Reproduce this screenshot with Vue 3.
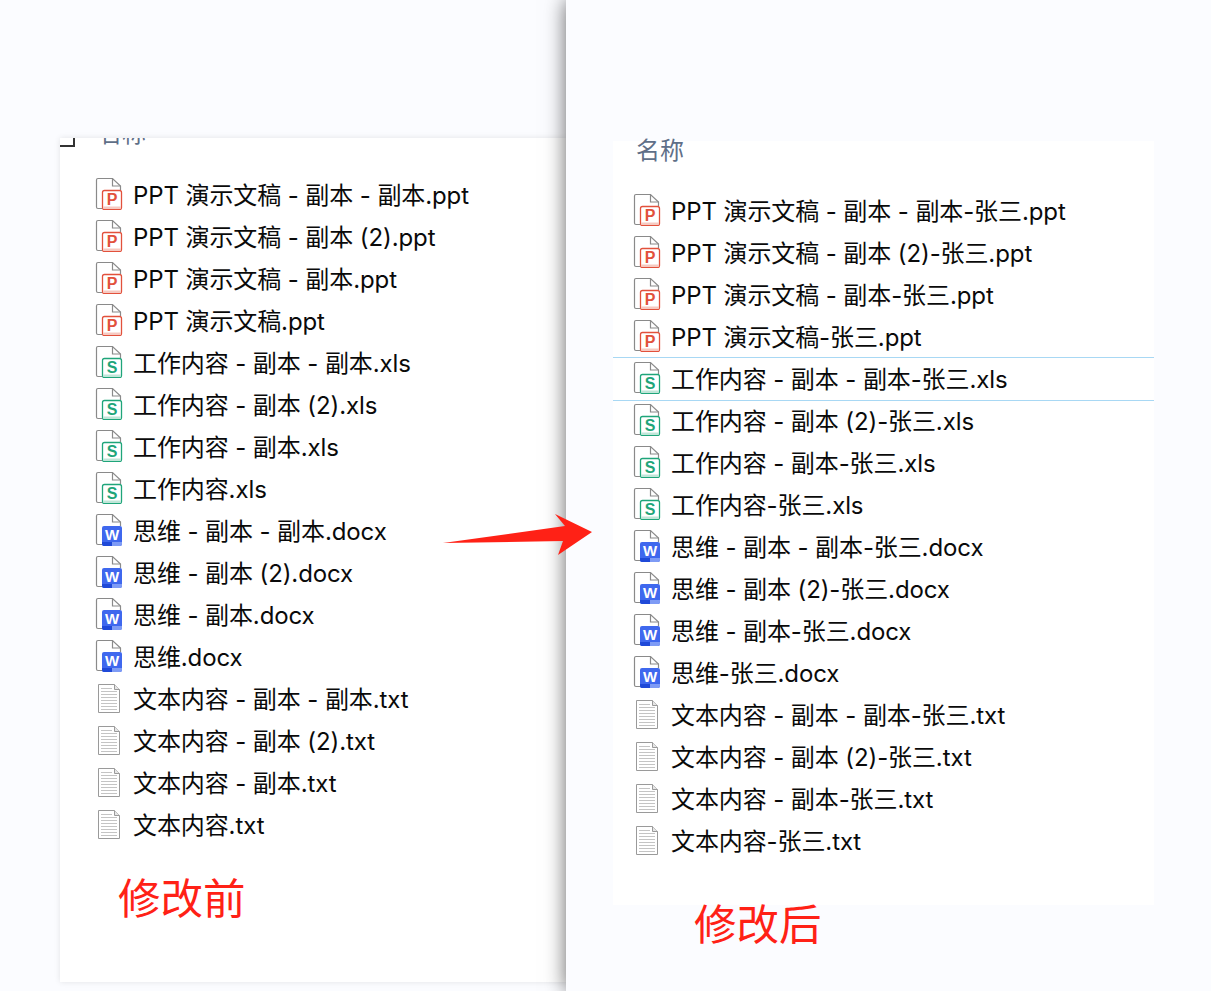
<script setup>
const stems = [
  { base: 'PPT 演示文稿', ext: 'ppt', type: 'p' },
  { base: '工作内容', ext: 'xls', type: 's' },
  { base: '思维', ext: 'docx', type: 'w' },
  { base: '文本内容', ext: 'txt', type: 't' }
]
const build = (suffix) => {
  const out = []
  stems.forEach((s) => {
    ;[' - 副本 - 副本', ' - 副本 (2)', ' - 副本', ''].forEach((v) => {
      out.push({ name: `${s.base}${v}${suffix}.${s.ext}`, type: s.type })
    })
  })
  return out
}
const before = build('')
const after = build('-张三')
const badges = {
  p: { border: '#e2513c', strip: '#f6c9c1', letter: 'P' },
  s: { border: '#1fa57a', strip: '#bfe6d8', letter: 'S' }
}
const panes = [
  { key: 'before', files: before },
  { key: 'after', files: after }
]
</script>

<template>
  <div class="page">
    <section v-for="pane in panes" :key="pane.key" class="pane" :class="pane.key">
      <div class="panel">
        <header class="head">
          <i v-if="pane.key === 'before'" class="check"></i>
          <span class="title">名称</span>
        </header>
        <ul class="list">
          <li v-for="(f, i) in pane.files" :key="f.name" class="row" :class="{ mark: pane.key === 'after' && i === 4 }">
            <svg class="icon" width="28" height="34" viewBox="0 -1 28 34">
              <template v-if="f.type === 't'">
                <path d="M3.5 3.5H19.5L24.5 8.5V31.5H3.5Z" fill="#fff" stroke="#9a9a9a" />
                <path d="M19.5 3.5V8.5H24.5" fill="#e6e6e6" stroke="#9a9a9a" />
                <path d="M6 7.5H17M6 10.5H22M6 13.5H22M6 16.5H22M6 19.5H22M6 22.5H22M6 25.5H22M6 28.5H22" stroke="#c4c4c4" fill="none" />
              </template>
              <template v-else>
                <path d="M7 31.5H3C2 31.5 1.5 31 1.5 30V3C1.5 2 2 1.5 3 1.5H17.5L25.5 9V13" fill="#fff" stroke="#8a8a8a" stroke-width="1.2" />
                <path d="M17.5 1.5V9H25.5" fill="none" stroke="#8a8a8a" stroke-width="1.2" />
                <template v-if="f.type === 'w'">
                  <rect x="7" y="13" width="20" height="20" rx="2" fill="#3f68ee" />
                  <path d="M7 29H17V33H9C8 33 7 32 7 31Z" fill="#1f49d8" />
                  <path d="M17 29H27V31C27 32 26 33 25 33H17Z" fill="#7e9bf5" />
                  <text x="17" y="27" class="badge-letter white">W</text>
                </template>
                <template v-else>
                  <rect x="7.5" y="13.5" width="19" height="19" rx="2" fill="#fff" :stroke="badges[f.type].border" stroke-width="1.3" />
                  <rect x="8.2" y="29.5" width="17.6" height="2.4" :fill="badges[f.type].strip" />
                  <text x="17" y="28" class="badge-letter" :fill="badges[f.type].border">{{ badges[f.type].letter }}</text>
                </template>
              </template>
            </svg>
            <span class="name">{{ f.name }}</span>
          </li>
        </ul>
        <p v-if="pane.key === 'before'" class="label">修改前</p>
      </div>
      <p v-if="pane.key === 'after'" class="label">修改后</p>
    </section>
    <svg class="arrow" width="160" height="50" viewBox="0 0 160 50">
      <polygon points="3,29 125,12 115,0 152,18 118,41 123,27" fill="#ff2116" />
    </svg>
  </div>
</template>

<style>
html, body { margin: 0; background: #fbfcff; }
</style>

<style scoped>
.page {
  position: relative;
  display: flex;
  width: 1211px;
  height: 991px;
  overflow: hidden;
  background: #fbfcff;
  font-family: Inter, "Noto Sans CJK SC", sans-serif;
}
.pane { box-sizing: border-box; height: 991px; }
.before { width: 566px; padding: 138px 0 9px 60px; }
.after {
  flex: 1;
  position: relative;
  padding: 141px 57px 0 47px;
  background: #fbfcff;
  box-shadow: 0 0 20px rgba(0, 0, 0, 0.6);
}
.panel { background: #fff; box-sizing: border-box; }
.before .panel {
  height: 844px;
  box-shadow: 0 0 6px rgba(0, 0, 0, 0.1);
  overflow: hidden;
}
.after .panel { height: 764px; }
.head {
  position: relative;
  display: flex;
  align-items: flex-end;
  color: #5f6f88;
  font-size: 24px;
  line-height: 32px;
}
.before .head { height: 34px; padding-left: 38px; }
.before .title { margin-top: -20px; align-self: flex-start; }
.after .head { height: 47px; padding-left: 23px; }
.after .title { align-self: flex-start; margin-top: -6px; }
.check {
  position: absolute;
  left: 0;
  top: 0;
  width: 13px;
  height: 7px;
  border-right: 2px solid #333;
  border-bottom: 2px solid #333;
}
.list { list-style: none; margin: 0; padding: 0; }
.row {
  position: relative;
  display: flex;
  align-items: center;
  height: 42px;
  font-size: 24px;
  letter-spacing: -0.1px;
  color: #0a0a0a;
  white-space: nowrap;
}
.before .row { padding-left: 35px; }
.after .row { padding-left: 20px; }
.icon { flex: none; margin-right: 10px; }
.mark::before,
.mark::after {
  content: "";
  position: absolute;
  left: 0;
  right: 0;
  height: 1px;
  background: #a8d8f4;
}
.mark::before { top: 1px; }
.mark::after { bottom: -3px; }
.badge-letter {
  font-family: "Liberation Sans", sans-serif;
  font-size: 16px;
  font-weight: 700;
  text-anchor: middle;
}
.badge-letter.white { fill: #fff; font-size: 15px; }
.label {
  margin: 0;
  color: #ff2116;
  font-size: 42.5px;
  line-height: 40px;
}
.before .label { padding: 35px 0 0 58px; }
.after .label { padding: 0 0 0 81px; }
.arrow { position: absolute; left: 440px; top: 514px; }
</style>
